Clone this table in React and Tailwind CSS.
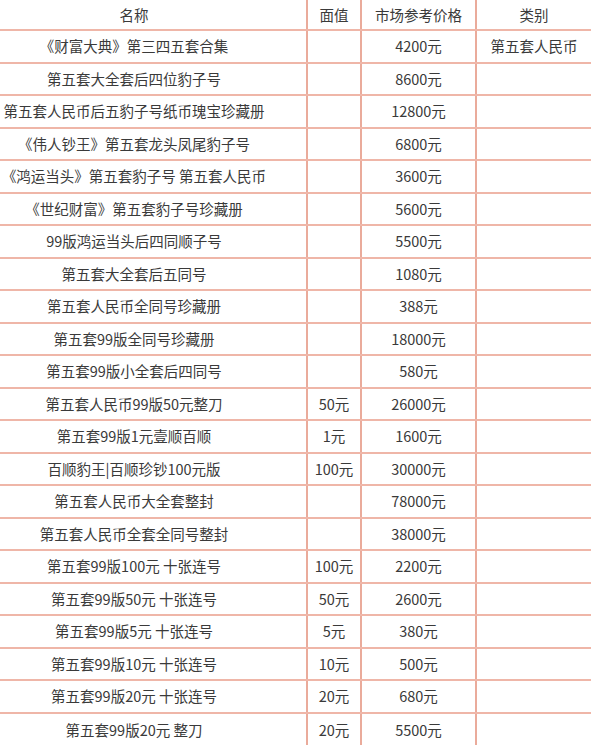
const rows = [
  ["《财富大典》第三四五套合集", "", "4200元", "第五套人民币"],
  ["第五套大全套后四位豹子号", "", "8600元", ""],
  ["第五套人民币后五豹子号纸币瑰宝珍藏册", "", "12800元", ""],
  ["《伟人钞王》第五套龙头凤尾豹子号", "", "6800元", ""],
  ["《鸿运当头》第五套豹子号 第五套人民币", "", "3600元", ""],
  ["《世纪财富》第五套豹子号珍藏册", "", "5600元", ""],
  ["99版鸿运当头后四同顺子号", "", "5500元", ""],
  ["第五套大全套后五同号", "", "1080元", ""],
  ["第五套人民币全同号珍藏册", "", "388元", ""],
  ["第五套99版全同号珍藏册", "", "18000元", ""],
  ["第五套99版小全套后四同号", "", "580元", ""],
  ["第五套人民币99版50元整刀", "50元", "26000元", ""],
  ["第五套99版1元壹顺百顺", "1元", "1600元", ""],
  ["百顺豹王|百顺珍钞100元版", "100元", "30000元", ""],
  ["第五套人民币大全套整封", "", "78000元", ""],
  ["第五套人民币全套全同号整封", "", "38000元", ""],
  ["第五套99版100元 十张连号", "100元", "2200元", ""],
  ["第五套99版50元 十张连号", "50元", "2600元", ""],
  ["第五套99版5元 十张连号", "5元", "380元", ""],
  ["第五套99版10元 十张连号", "10元", "500元", ""],
  ["第五套99版20元 十张连号", "20元", "680元", ""],
  ["第五套99版20元 整刀", "20元", "5500元", ""],
];

function Row({ cells, header }) {
  return (
    <div
      className={`grid grid-cols-[308px_54px_115px_114px] border-b-2 last:border-b-0 border-[#efb6a8] ${
        header ? "h-[31px]" : "h-[32.5px]"
      }`}
    >
      <div className="flex items-center justify-center pr-[38px] border-r-2 border-[#eaab9b] whitespace-nowrap">
        {cells[0]}
      </div>
      <div className="flex items-center justify-center border-r-2 border-[#eaab9b] whitespace-nowrap">
        {cells[1]}
      </div>
      <div className="flex items-center justify-center border-r-2 border-[#eaab9b] whitespace-nowrap">
        {cells[2]}
      </div>
      <div className="flex items-center justify-center whitespace-nowrap">
        {cells[3]}
      </div>
    </div>
  );
}

export default function App() {
  return (
    <div className="w-[600px] h-[745px] overflow-hidden bg-white text-[#3a3a3a] text-[14.5px] font-['Noto_Sans_CJK_SC','Microsoft_YaHei',sans-serif]">
      <div className="w-[591px] flex flex-col">
        <Row header cells={["名称", "面值", "市场参考价格", "类别"]} />
        {rows.map((r, i) => (
          <Row key={i} cells={r} />
        ))}
      </div>
    </div>
  );
}
